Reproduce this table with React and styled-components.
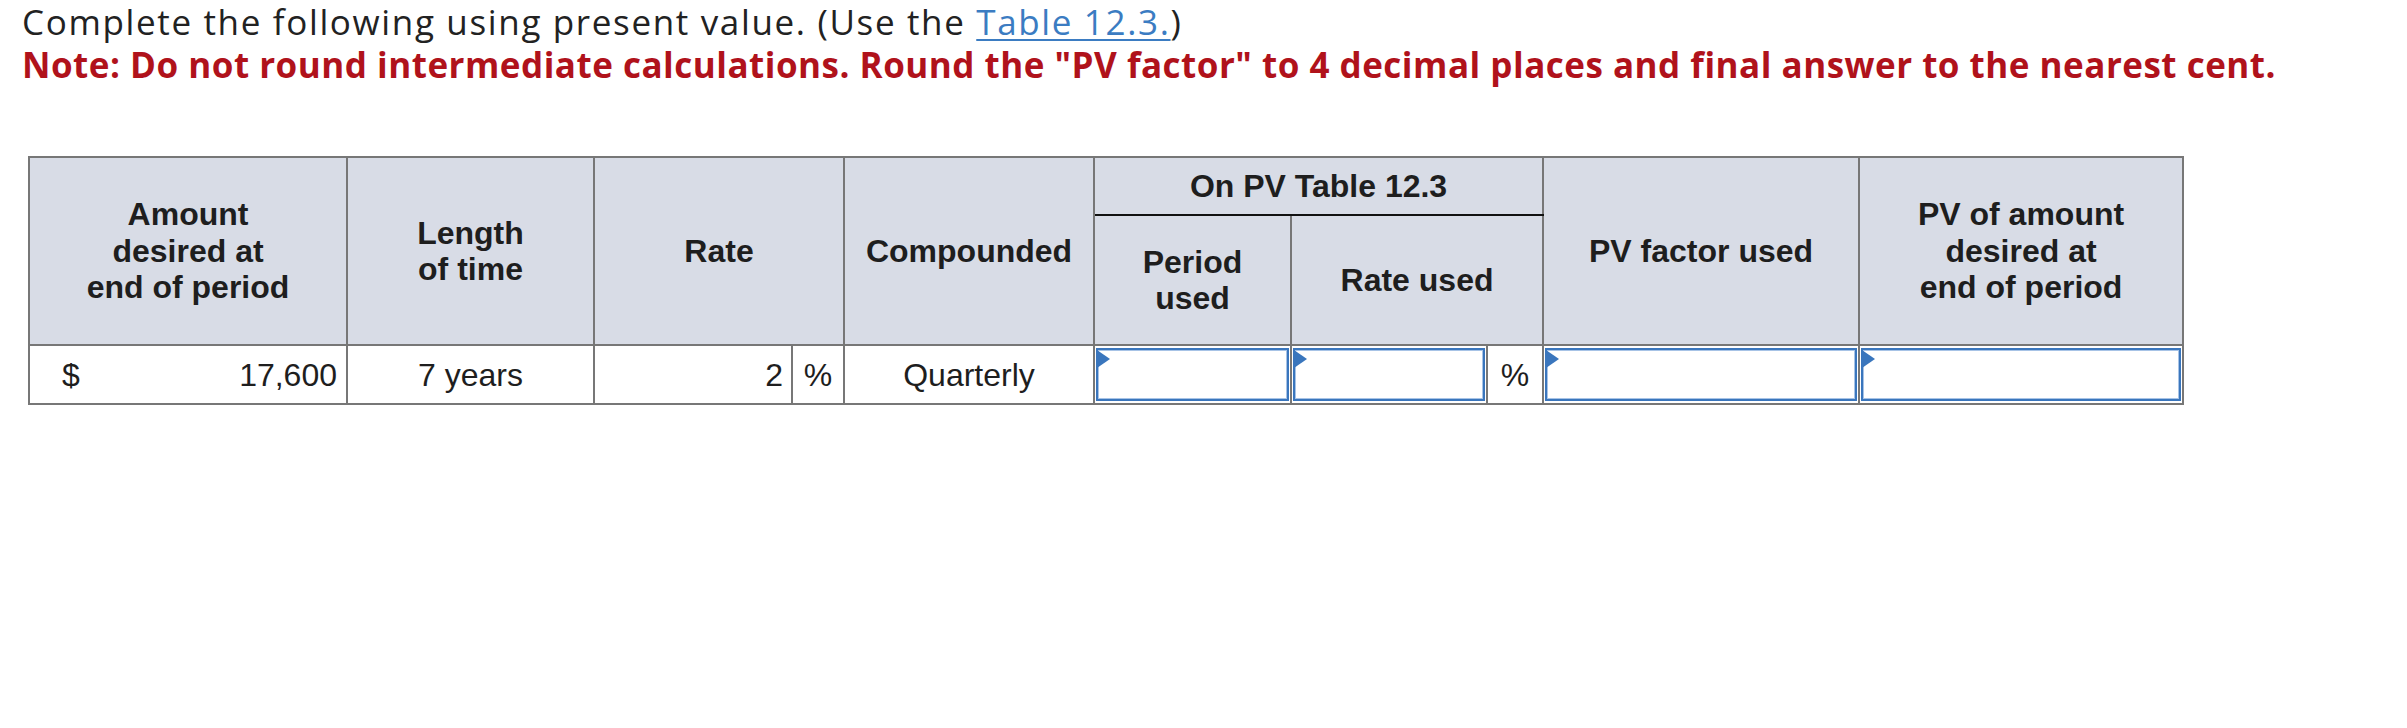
import styled, { createGlobalStyle } from "styled-components";

const GlobalStyle = createGlobalStyle`
  body {
    margin: 0;
    background: #fff;
  }
`;

const Page = styled.div`
  padding: 0 0 0 22px;
`;

const Intro = styled.p`
  margin: 0;
  font-family: "Open Sans", sans-serif;
  font-size: 35px;
  line-height: 43px;
  letter-spacing: ${(p) => p.spacing || "1.65px"};
  font-variant-ligatures: none;
  color: #222;
`;

const TableLink = styled.a`
  color: #3b7cc2;
  text-decoration: underline;
  text-decoration-thickness: 2px;
  text-underline-offset: 4px;
`;

const Note = styled(Intro)`
  font-weight: 700;
  color: #b0121b;
`;

const Grid = styled.table`
  margin: 70px 0 0 6px;
  border-collapse: collapse;
  table-layout: fixed;
  width: 2156px;
  font-family: "Liberation Sans", Arial, sans-serif;
  font-size: 32px;
  color: #1e1e1e;

  td,
  th {
    border: 2px solid #777;
    padding: 0;
  }
`;

const Head = styled.th`
  background: #d8dce6;
  font-weight: 700;
  line-height: 36.5px;
  text-align: center;
  vertical-align: middle;
  height: ${(p) => p.h || "auto"};
`;

const GroupHead = styled(Head)`
  && {
    border-bottom: 2px solid #111;
  }
`;

const Cell = styled.td`
  height: 55px;
  line-height: 36px;
  text-align: ${(p) => p.align || "center"};
  padding: ${(p) => p.pad || "0"} !important;
  vertical-align: middle;
`;

const Amount = styled.div`
  display: flex;
  justify-content: space-between;
  padding: 0 9px 0 32px;
`;

const InputCell = styled.td`
  && {
    padding: 1px;
  }
  height: 55px;
`;

const Field = styled.div`
  position: relative;
  height: 49px;
  border: 2px solid #3a76bd;
  box-shadow: inset 0 0 0 1px #a7c3e6;
  background: #fff;

  &::before {
    content: "";
    position: absolute;
    left: -1px;
    top: 0;
    border-top: 9px solid transparent;
    border-bottom: 9px solid transparent;
    border-left: 13px solid #3a76bd;
  }
`;

export default function App() {
  return (
    <>
      <GlobalStyle />
      <Page>
        <Intro>
          Complete the following using present value. (Use the{" "}
          <TableLink href="#">Table 12.3.</TableLink>)
        </Intro>
        <Note spacing="0.5px">
          Note: Do not round intermediate calculations. Round the "PV factor"
          to 4 decimal places and final answer to the nearest cent.
        </Note>
        <Grid>
          <colgroup>
            <col style={{ width: 318 }} />
            <col style={{ width: 247 }} />
            <col style={{ width: 198 }} />
            <col style={{ width: 52 }} />
            <col style={{ width: 250 }} />
            <col style={{ width: 197 }} />
            <col style={{ width: 196 }} />
            <col style={{ width: 56 }} />
            <col style={{ width: 316 }} />
            <col style={{ width: 324 }} />
          </colgroup>
          <thead>
            <tr>
              <Head rowSpan={2}>
                Amount
                <br />
                desired at
                <br />
                end of period
              </Head>
              <Head rowSpan={2}>
                Length
                <br />
                of time
              </Head>
              <Head rowSpan={2} colSpan={2}>
                Rate
              </Head>
              <Head rowSpan={2}>Compounded</Head>
              <GroupHead colSpan={3} h="56px">
                On PV Table 12.3
              </GroupHead>
              <Head rowSpan={2}>PV factor used</Head>
              <Head rowSpan={2}>
                PV of amount
                <br />
                desired at
                <br />
                end of period
              </Head>
            </tr>
            <tr>
              <Head h="128px">
                Period
                <br />
                used
              </Head>
              <Head colSpan={2}>Rate used</Head>
            </tr>
          </thead>
          <tbody>
            <tr>
              <Cell>
                <Amount>
                  <span>$</span>
                  <span>17,600</span>
                </Amount>
              </Cell>
              <Cell>7 years</Cell>
              <Cell align="right" pad="0 8px">
                2
              </Cell>
              <Cell>%</Cell>
              <Cell>Quarterly</Cell>
              <InputCell>
                <Field />
              </InputCell>
              <InputCell>
                <Field />
              </InputCell>
              <Cell>%</Cell>
              <InputCell>
                <Field />
              </InputCell>
              <InputCell>
                <Field />
              </InputCell>
            </tr>
          </tbody>
        </Grid>
      </Page>
    </>
  );
}
